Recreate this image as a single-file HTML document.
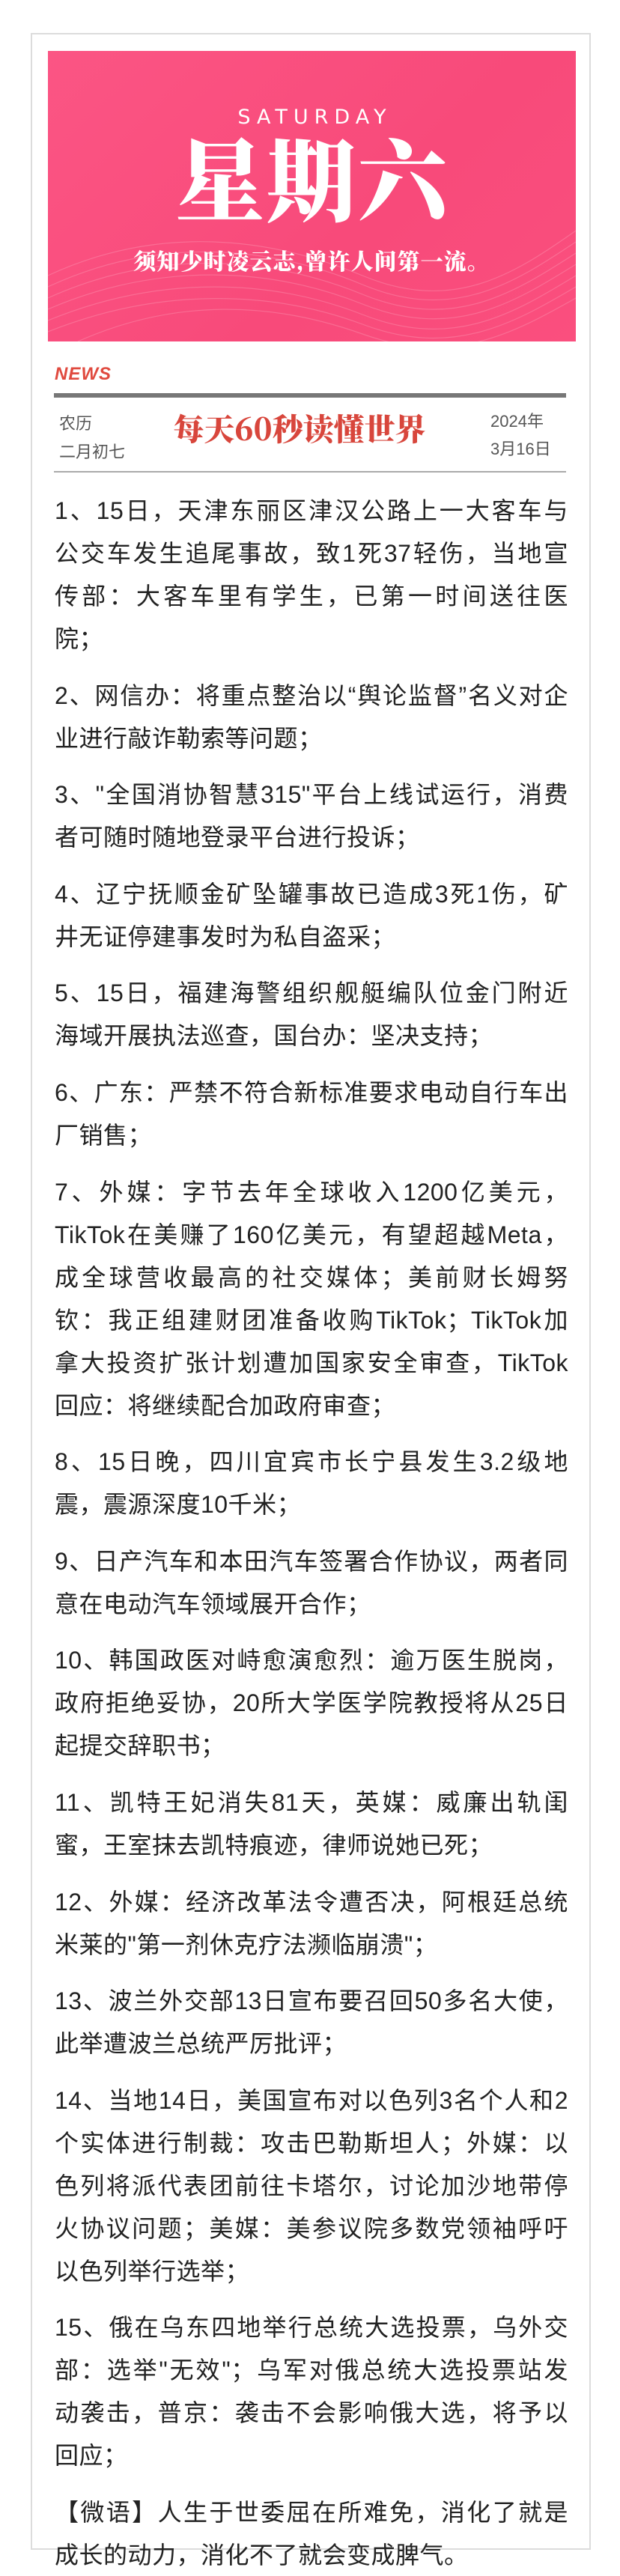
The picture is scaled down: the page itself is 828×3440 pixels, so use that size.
<!DOCTYPE html>
<html><head><meta charset="utf-8"><style>
*{margin:0;padding:0;box-sizing:border-box}
html,body{width:828px;height:3440px;background:#fff;overflow:hidden}
body{position:relative;font-family:"Liberation Sans","Noto Sans CJK SC",sans-serif;color:#222}
.card{position:absolute;left:41px;top:44px;width:748px;height:3361px;border:2px solid #dcdcdc}
.banner{position:absolute;left:64px;top:68px;width:705px;height:388px;background:linear-gradient(135deg,#fb5584 0%,#f84a7a 60%,#fa4f7e 100%);overflow:hidden}
.sat{position:absolute;left:0;width:705px;top:74px;text-align:center;color:#fff;font-size:27px;letter-spacing:8px;font-family:"DejaVu Sans","Liberation Sans",sans-serif;line-height:30px;padding-left:8px}
.big{position:absolute;left:0;width:705px;top:100px;text-align:center;color:#fff;font-size:120px;line-height:135px;font-family:"Noto Serif CJK SC",serif;font-weight:900;letter-spacing:2px}
.tag{position:absolute;left:0;width:705px;top:260px;text-align:center;color:#fff;font-size:30px;line-height:38px;font-family:"Noto Serif CJK SC",serif;font-weight:900;letter-spacing:1px}
.news{position:absolute;left:73px;top:486px;color:#e04a3f;font-size:24px;font-weight:bold;font-style:italic;line-height:28px;letter-spacing:1px}
.bar{position:absolute;left:72px;top:525px;width:684px;height:6px;background:#777}
.hl{position:absolute;left:72px;top:629px;width:684px;height:2px;background:#aaa}
.lunar{position:absolute;left:79px;top:547px;color:#555;font-size:22px;line-height:38px}
.date{position:absolute;left:655px;top:544px;color:#555;font-size:22px;line-height:37px}
.title{position:absolute;left:214px;top:546px;width:372px;text-align:center;color:#d8463c;font-size:41px;line-height:50px;font-family:"Noto Serif CJK SC",serif;font-weight:900}
.content{position:absolute;left:73px;top:654px;width:686px;font-size:32px;line-height:57px;letter-spacing:0.5px;color:#222}
.p{margin-bottom:18.6px}
.l{white-space:nowrap}
.j{text-align:justify;text-align-last:justify;text-justify:inter-character}
</style></head><body>
<div class="card"></div>
<div class="banner">
<svg width="705" height="388" style="position:absolute;left:0;top:0" viewBox="0 0 705 388">
<g fill="none" stroke="#fff" stroke-opacity="0.18" stroke-width="1.2">
<path d="M0 300 C150 230 300 250 420 300 S620 300 705 240"/>
<path d="M0 315 C150 245 300 262 420 312 S620 312 705 255"/>
<path d="M0 330 C150 262 300 276 420 325 S620 325 705 270"/>
<path d="M0 345 C150 280 300 290 420 338 S620 338 705 285"/>
<path d="M0 360 C150 298 300 305 420 352 S620 352 705 300"/>
<path d="M0 375 C150 315 300 320 420 365 S620 365 705 315"/>
<path d="M40 388 C170 330 300 335 420 378 S620 378 705 330"/>
</g></svg>
<div class="sat">SATURDAY</div>
<div class="big">星期六</div>
<div class="tag">须知少时凌云志,曾许人间第一流。</div>
</div>
<div class="news">NEWS</div>
<div class="bar"></div>
<div class="lunar">农历<br>二月初七</div>
<div class="title">每天60秒读懂世界</div>
<div class="date">2024年<br>3月16日</div>
<div class="hl"></div>
<div class="content">
<div class="p"><div class="l j">1、15日，天津东丽区津汉公路上一大客车与</div><div class="l j">公交车发生追尾事故，致1死37轻伤，当地宣</div><div class="l j">传部：大客车里有学生，已第一时间送往医</div><div class="l">院；</div></div>
<div class="p"><div class="l j">2、网信办：将重点整治以“舆论监督”名义对企</div><div class="l">业进行敲诈勒索等问题；</div></div>
<div class="p"><div class="l j">3、"全国消协智慧315"平台上线试运行，消费</div><div class="l">者可随时随地登录平台进行投诉；</div></div>
<div class="p"><div class="l j">4、辽宁抚顺金矿坠罐事故已造成3死1伤，矿</div><div class="l">井无证停建事发时为私自盗采；</div></div>
<div class="p"><div class="l j">5、15日，福建海警组织舰艇编队位金门附近</div><div class="l">海域开展执法巡查，国台办：坚决支持；</div></div>
<div class="p"><div class="l j">6、广东：严禁不符合新标准要求电动自行车出</div><div class="l">厂销售；</div></div>
<div class="p"><div class="l j">7、外媒：字节去年全球收入1200亿美元，</div><div class="l j">TikTok在美赚了160亿美元，有望超越Meta，</div><div class="l j">成全球营收最高的社交媒体；美前财长姆努</div><div class="l j">钦：我正组建财团准备收购TikTok；TikTok加</div><div class="l j">拿大投资扩张计划遭加国家安全审查，TikTok</div><div class="l">回应：将继续配合加政府审查；</div></div>
<div class="p"><div class="l j">8、15日晚，四川宜宾市长宁县发生3.2级地</div><div class="l">震，震源深度10千米；</div></div>
<div class="p"><div class="l j">9、日产汽车和本田汽车签署合作协议，两者同</div><div class="l">意在电动汽车领域展开合作；</div></div>
<div class="p"><div class="l j">10、韩国政医对峙愈演愈烈：逾万医生脱岗，</div><div class="l j">政府拒绝妥协，20所大学医学院教授将从25日</div><div class="l">起提交辞职书；</div></div>
<div class="p"><div class="l j">11、凯特王妃消失81天，英媒：威廉出轨闺</div><div class="l">蜜，王室抹去凯特痕迹，律师说她已死；</div></div>
<div class="p"><div class="l j">12、外媒：经济改革法令遭否决，阿根廷总统</div><div class="l">米莱的"第一剂休克疗法濒临崩溃"；</div></div>
<div class="p"><div class="l j">13、波兰外交部13日宣布要召回50多名大使，</div><div class="l">此举遭波兰总统严厉批评；</div></div>
<div class="p"><div class="l j">14、当地14日，美国宣布对以色列3名个人和2</div><div class="l j">个实体进行制裁：攻击巴勒斯坦人；外媒：以</div><div class="l j">色列将派代表团前往卡塔尔，讨论加沙地带停</div><div class="l j">火协议问题；美媒：美参议院多数党领袖呼吁</div><div class="l">以色列举行选举；</div></div>
<div class="p"><div class="l j">15、俄在乌东四地举行总统大选投票，乌外交</div><div class="l j">部：选举"无效"；乌军对俄总统大选投票站发</div><div class="l j">动袭击，普京：袭击不会影响俄大选，将予以</div><div class="l">回应；</div></div>
<div class="p"><div class="l j">【微语】人生于世委屈在所难免，消化了就是</div><div class="l">成长的动力，消化不了就会变成脾气。</div></div>
</div>
</body></html>
